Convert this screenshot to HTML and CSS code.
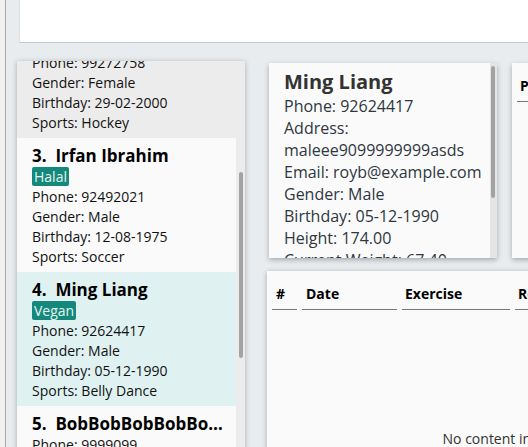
FILE: index.html
```
<!DOCTYPE html>
<html>
<head>
<meta charset="utf-8">
<link rel="stylesheet" href="styles.css">
</head>
<body>
<div class="app">
  <div class="edge"></div>
  <div class="main">
    <div class="command-box"></div>
    <div class="content">
      <div class="list-panel">
        <div class="list-view">
          <div class="list-inner">
            <div class="card card-hover">
              <div class="card-title">2.&nbsp;&nbsp;Alex Yeoh</div>
              <div class="card-line">Phone: 99272758</div>
              <div class="card-line">Gender: Female</div>
              <div class="card-line">Birthday: 29-02-2000</div>
              <div class="card-line">Sports: Hockey</div>
            </div>
            <div class="card">
              <div class="card-title">3.&nbsp;&nbsp;Irfan Ibrahim</div>
              <div class="tags"><span class="tag">Halal</span></div>
              <div class="card-line">Phone: 92492021</div>
              <div class="card-line">Gender: Male</div>
              <div class="card-line">Birthday: 12-08-1975</div>
              <div class="card-line">Sports: Soccer</div>
            </div>
            <div class="card card-selected">
              <div class="card-title">4.&nbsp;&nbsp;Ming Liang</div>
              <div class="tags"><span class="tag">Vegan</span></div>
              <div class="card-line">Phone: 92624417</div>
              <div class="card-line">Gender: Male</div>
              <div class="card-line">Birthday: 05-12-1990</div>
              <div class="card-line">Sports: Belly Dance</div>
            </div>
            <div class="card">
              <div class="card-title">5.&nbsp;&nbsp;BobBobBobBobBobBobBob</div>
              <div class="card-line">Phone: 9999099</div>
              <div class="card-line">Gender: Male</div>
              <div class="card-line">Birthday: 01-01-2001</div>
              <div class="card-line">Sports: Tennis</div>
            </div>
          </div>
        </div>
        <div class="vscroll list-scroll"><div class="thumb list-thumb"></div></div>
      </div>
      <div class="right">
        <div class="top-row">
          <div class="detail">
            <div class="detail-body">
              <div class="detail-name">Ming Liang</div>
              <div class="detail-line">Phone: 92624417</div>
              <div class="detail-line">Address: maleee9099999999asds</div>
              <div class="detail-line">Email: royb@example.com</div>
              <div class="detail-line">Gender: Male</div>
              <div class="detail-line">Birthday: 05-12-1990</div>
              <div class="detail-line">Height: 174.00</div>
              <div class="detail-line">Current Weight: 67.40</div>
              <div class="detail-line">Sports: Belly Dance</div>
            </div>
            <div class="vscroll detail-scroll"><div class="thumb detail-thumb"></div></div>
          </div>
          <div class="side-card">
            <div class="side-head">Progress</div>
          </div>
        </div>
        <div class="table-panel">
          <div class="thead">
            <div class="th col-num">#</div>
            <div class="th col-date">Date</div>
            <div class="th col-ex">Exercise</div>
            <div class="th col-rest">Reps</div>
          </div>
          <div class="tbody">No content in table</div>
        </div>
      </div>
    </div>
  </div>
</div>
</body>
</html>
```

FILE: styles.css
```
html, body {
  margin: 0;
  padding: 0;
}
body {
  width: 528px;
  height: 447px;
  overflow: hidden;
  background: #e8ecef;
  font-family: "Open Sans", "DejaVu Sans", sans-serif;
  color: #111;
}
.app {
  display: flex;
  width: 800px;
  height: 600px;
}
.edge {
  width: 5px;
  flex: none;
  background: #f1f1f1;
  border-right: 1px solid #a9a9a9;
}
.main {
  flex: 1;
  display: flex;
  flex-direction: column;
}
.command-box {
  margin-left: 13px;
  height: 42px;
  background: #ffffff;
  border-bottom: 1px solid #c6c9cc;
  border-left: 1px solid #dcdfe2;
}
.content {
  display: flex;
  margin-top: 18px;
  margin-left: 11px;
  gap: 22px;
}
.list-panel {
  width: 228px;
  height: 420px;
  display: flex;
  background: #fafafa;
  box-shadow: 0 1px 5px rgba(0,0,0,0.28);
  flex: none;
}
.list-view {
  width: 219px;
  overflow: hidden;
}
.list-inner {
  margin-top: -37px;
}
.card {
  padding: 6px 12px 5px 15px;
  background: #fafafa;
}
.card-hover { background: #ececec; }
.card-selected { background: #dff1f1; }
.card-title {
  font-weight: 700;
  font-size: 17px;
  line-height: 23px;
  white-space: nowrap;
  overflow: hidden;
  text-overflow: ellipsis;
  color: #000;
}
.tags {
  display: flex;
  height: 19px;
  margin-bottom: 1px;
}
.tag {
  background: #14897b;
  color: #e6f4f2;
  font-size: 14px;
  line-height: 19px;
  padding: 0 2px;
  border-radius: 2px;
}
.card-line {
  font-size: 14px;
  line-height: 20px;
  white-space: nowrap;
  color: #111;
}
.vscroll {
  background: #ececec;
  flex: none;
}
.list-scroll {
  width: 9px;
}
.thumb {
  background: #a3a3a3;
  border-radius: 2px;
}
.list-thumb {
  margin: 111px 0 0 3px;
  width: 4px;
  height: 186px;
}
.right {
  display: flex;
  flex-direction: column;
  flex: none;
  width: 480px;
}
.top-row {
  display: flex;
  margin-top: 2px;
  margin-left: 2px;
  gap: 15px;
}
.detail {
  width: 228px;
  height: 195px;
  display: flex;
  background: #fafafa;
  box-shadow: 0 2px 5px rgba(0,0,0,0.28);
  flex: none;
}
.detail-body {
  flex: 1;
  padding: 5px 4px 0 15px;
  overflow: hidden;
  color: #2f3740;
}
.detail-name {
  font-weight: 700;
  font-size: 20px;
  line-height: 27px;
  color: #333;
}
.detail-line {
  font-size: 16px;
  line-height: 22px;
}
.detail-scroll {
  width: 7px;
  background: #e4e4e4;
}
.detail-thumb {
  margin: 3px 0 0 1px;
  width: 4px;
  height: 132px;
}
.side-card {
  width: 228px;
  height: 195px;
  background: #fafafa;
  box-shadow: 0 2px 5px rgba(0,0,0,0.28);
  flex: none;
  padding: 13px 0 0 5px;
  box-sizing: border-box;
}
.side-head {
  font-weight: 700;
  font-size: 14px;
  line-height: 20px;
  padding: 0 0 5px 3px;
  border-bottom: 1px solid #777;
  color: #000;
}
.table-panel {
  margin-top: 13px;
  height: 300px;
  background: #fafafa;
  box-shadow: 0 1px 5px rgba(0,0,0,0.28);
  display: flex;
  flex-direction: column;
}
.thead {
  display: flex;
  padding: 13px 0 0 5px;
  gap: 5px;
}
.th {
  font-weight: 700;
  font-size: 14px;
  line-height: 20px;
  padding: 0 0 5px 4px;
  border-bottom: 1px solid #777;
  color: #000;
  box-sizing: border-box;
}
.col-num { width: 25px; }
.col-date { width: 95px; }
.col-ex { width: 108px; padding-left: 3px; }
.col-rest { width: 100px; padding-left: 3px; }
.tbody {
  height: 256px;
  display: flex;
  align-items: center;
  justify-content: center;
  padding-right: 4px;
  font-size: 14px;
  color: #333;
}
```
